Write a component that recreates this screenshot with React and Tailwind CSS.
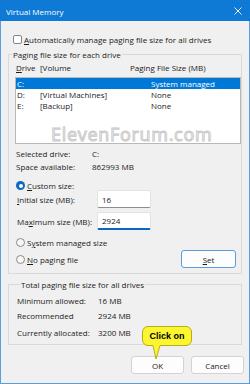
import React from "react";

const font = "font-['Open_Sans','Noto_Sans',sans-serif]";

const Radio = ({ checked }) =>
  checked ? (
    <span className="flex h-[9px] w-[9px] shrink-0 items-center justify-center rounded-full bg-[#0a67c2]">
      <span className="h-[4px] w-[4px] rounded-full bg-white" />
    </span>
  ) : (
    <span className="h-[9px] w-[9px] shrink-0 rounded-full border border-[#8a8a8a] bg-[#f7f7f7]" />
  );

const Row = ({ label, value, className = "" }) => (
  <div className={`flex h-[11px] items-center ${className}`}>
    <span className="w-[81px]">{label}</span>
    <span>{value}</span>
  </div>
);

const App = () => {
  return (
    <div
      className={`${font} flex h-[384px] w-[250px] flex-col bg-[#f0f0f0] text-[8px] leading-[11px] text-[#1b1b1b]`}
    >
      {/* Title bar */}
      <div className="flex h-[21px] shrink-0 items-center justify-between bg-[#0f79d6] pl-[6px] pr-[8px] pt-[1px] text-white">
        <span>Virtual Memory</span>
        <svg width="8" height="8" viewBox="0 0 8 8">
          <path d="M0.5 0.5 L7.5 7.5 M7.5 0.5 L0.5 7.5" stroke="white" strokeWidth="0.9" />
        </svg>
      </div>

      <div className="relative flex flex-1 flex-col border-x border-b border-[#5a9de0] pl-[7px] pr-[6px]">
        {/* Auto manage */}
        <div className="mt-[13px] flex h-[10px] items-center">
          <span className="ml-[5px] h-[9px] w-[9px] rounded-[2px] border border-[#858585] bg-white" />
          <span className="ml-[2px]">
            <u className="underline-offset-1">A</u>utomatically manage paging file size for all drives
          </span>
        </div>

        {/* Paging file size for each drive */}
        <fieldset className="mt-[5px] w-[234px] border border-[#d9d9d9] pb-[5px]">
          <legend className="ml-[3px] px-[1px]">Paging file size for each drive</legend>
          <div className="pl-[6px]">
            <div className="mt-[2px] flex h-[11px] items-center pl-[1px]">
              <span className="w-[24px]">
                <u className="underline-offset-1">D</u>rive
              </span>
              <span className="w-[90px]">[Volume</span>
              <span>Paging File Size (MB)</span>
            </div>

            <div className="relative mt-[4px] h-[67px] w-[226px] border border-[#b9b9b9] bg-white">
              <div className="flex h-[11px] items-center bg-[#0078d7] pl-[1px] text-white">
                <span className="w-[134px]">C:</span>
                <span>System managed</span>
              </div>
              <div className="flex h-[11px] items-center pl-[1px]">
                <span className="w-[23px]">D:</span>
                <span className="w-[111px]">[Virtual Machines]</span>
                <span>None</span>
              </div>
              <div className="flex h-[11px] items-center pl-[1px]">
                <span className="w-[23px]">E:</span>
                <span className="w-[111px]">[Backup]</span>
                <span>None</span>
              </div>
              <div className="absolute left-[35px] top-[47px] text-[18px] leading-[18px] tracking-[0.7px] text-white [-webkit-text-stroke:1px_#c9c9c9]">
                ElevenForum.com
              </div>
            </div>

            <div className="mt-[3px] flex h-[13px] items-center pl-[1px]">
              <span className="w-[76px]">Selected drive:</span>
              <span>C:</span>
            </div>
            <div className="flex h-[13px] items-center pl-[1px]">
              <span className="w-[76px]">Space available:</span>
              <span>862993 MB</span>
            </div>

            <div className="mt-[8px] flex h-[9px] items-center pl-[1px]">
              <Radio checked />
              <span className="ml-[2px]">
                <u className="underline-offset-1">C</u>ustom size:
              </span>
            </div>

            <div className="flex h-[18px] items-center pl-[2px]">
              <span className="w-[80px]">
                <u className="underline-offset-1">I</u>nitial size (MB):
              </span>
              <div className="flex h-[18px] w-[54px] items-center rounded-[2px] border border-[#e2e2e2] border-b-[#8d8d8d] bg-white pl-[4px]">
                16
              </div>
            </div>
            <div className="mt-[4px] flex h-[18px] items-center pl-[2px]">
              <span className="w-[80px]">
                Ma<u className="underline-offset-1">x</u>imum size (MB):
              </span>
              <div className="flex h-[18px] w-[54px] items-center rounded-[2px] border border-[#e2e2e2] border-b-2 border-b-[#0a67c2] bg-white pl-[4px]">
                2924
              </div>
            </div>

            <div className="mt-[7px] flex h-[11px] items-center pl-[1px]">
              <Radio />
              <span className="ml-[2px]">
                S<u className="underline-offset-1">y</u>stem managed size
              </span>
            </div>
            <div className="mt-[2px] flex h-[18px] items-center justify-between pl-[1px] pr-[5px]">
              <div className="flex items-center">
                <Radio />
                <span className="ml-[2px]">
                  <u className="underline-offset-1">N</u>o paging file
                </span>
              </div>
              <button className="flex h-[18px] w-[55px] items-center justify-center rounded-[3px] border border-[#5b9be0] bg-[#fdfdfd]">
                <u className="underline-offset-1">S</u>et
              </button>
            </div>
          </div>
        </fieldset>

        {/* Totals */}
        <fieldset className="mt-[5px] w-[234px] border border-[#d9d9d9] pb-[6px] pl-[8px]">
          <legend className="ml-[3px] px-[1px]">Total paging file size for all drives</legend>
          <Row className="mt-[5px]" label="Minimum allowed:" value="16 MB" />
          <Row className="mt-[4px]" label="Recommended" value="2924 MB" />
          <Row className="mt-[6px]" label="Currently allocated:" value="3200 MB" />
        </fieldset>

        {/* Buttons */}
        <div className="mt-[11px] flex w-[236px] justify-end gap-[7px]">
          <button className="flex h-[18px] w-[53px] items-center justify-center rounded-[3px] border border-[#d3d3d3] bg-[#fdfdfd]">
            OK
          </button>
          <button className="flex h-[18px] w-[53px] items-center justify-center rounded-[3px] border border-[#d3d3d3] bg-[#fdfdfd]">
            Cancel
          </button>
        </div>

        {/* Callout */}
        <div className="absolute left-[141px] top-[305px]">
          <svg width="52" height="38" viewBox="0 0 52 38" className="absolute left-0 top-0">
            <path
              d="M6 0.5 H44 A5.5 5.5 0 0 1 49.5 6 V14 A5.5 5.5 0 0 1 44 19.5 H18 L14 33 L11 19.5 H6 A5.5 5.5 0 0 1 0.5 14 V6 A5.5 5.5 0 0 1 6 0.5 Z"
              fill="#fbf62f"
              stroke="#b7ad1c"
              strokeWidth="1"
            />
          </svg>
          <div className="relative flex h-[20px] w-[50px] items-center justify-center font-['Liberation_Sans',Arial,sans-serif] text-[9px] font-bold text-black">
            Click on
          </div>
        </div>
      </div>
    </div>
  );
};

export default App;
